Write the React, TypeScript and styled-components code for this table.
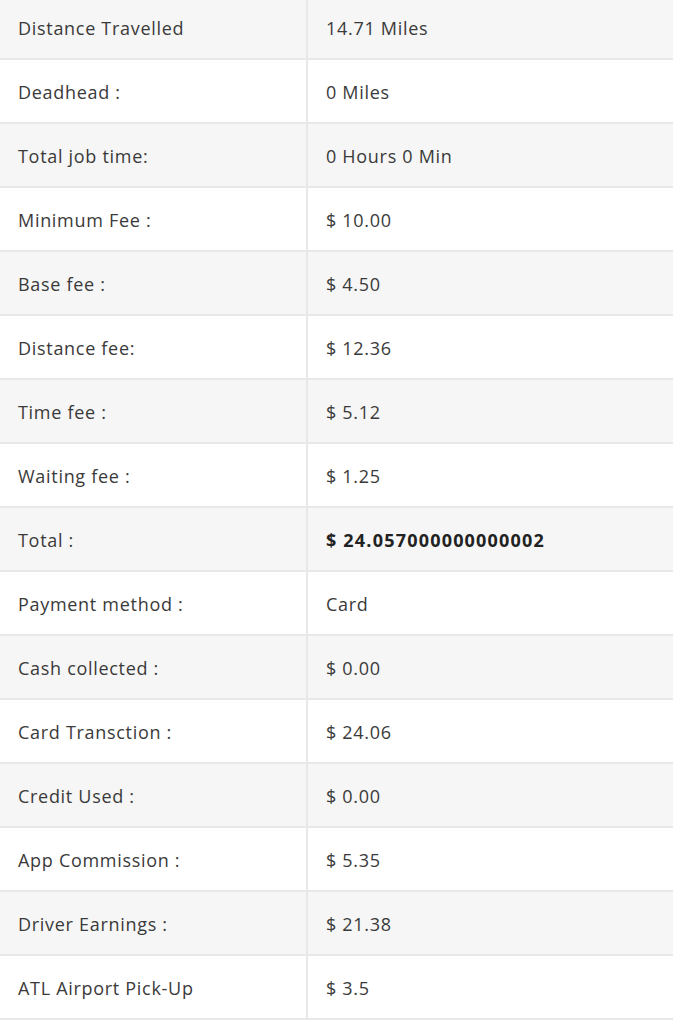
import React from "react";
import styled, { createGlobalStyle } from "styled-components";

const Global = createGlobalStyle`
  html, body { margin: 0; padding: 0; background: #ffffff; }
  body { font-family: "Open Sans", Lato, "Liberation Sans", sans-serif; overflow: hidden; }
`;

const Table = styled.div`
  display: flex;
  flex-direction: column;
  margin-top: -4px;
  width: 673px;
`;

const Row = styled.div<{ $shade: boolean }>`
  display: grid;
  grid-template-columns: 308px 1fr;
  height: 62px;
  background: ${(p) => (p.$shade ? "#f6f6f6" : "#ffffff")};
  border-bottom: 2px solid #e8e8e8;
`;

const Cell = styled.div<{ $bold?: boolean }>`
  display: flex;
  align-items: center;
  padding-top: 2px;
  padding-left: 18px;
  font-size: 18px;
  color: ${(p) => (p.$bold ? "#222222" : "#3a3a3a")};
  font-weight: ${(p) => (p.$bold ? 700 : 400)};
  letter-spacing: ${(p) => (p.$bold ? "1.2px" : "0.7px")};
`;

const LabelCell = styled(Cell)`
  border-right: 2px solid #e8e8e8;
`;

const ValueCell = styled(Cell)`
  padding-left: 18px;
`;

const rows: [string, string, boolean?][] = [
  ["Distance Travelled", "14.71 Miles"],
  ["Deadhead :", "0 Miles"],
  ["Total job time:", "0 Hours 0 Min"],
  ["Minimum Fee :", "$ 10.00"],
  ["Base fee :", "$ 4.50"],
  ["Distance fee:", "$ 12.36"],
  ["Time fee :", "$ 5.12"],
  ["Waiting fee :", "$ 1.25"],
  ["Total :", "$ 24.057000000000002", true],
  ["Payment method :", "Card"],
  ["Cash collected :", "$ 0.00"],
  ["Card Transction :", "$ 24.06"],
  ["Credit Used :", "$ 0.00"],
  ["App Commission :", "$ 5.35"],
  ["Driver Earnings :", "$ 21.38"],
  ["ATL Airport Pick-Up", "$ 3.5"],
];

export default function App() {
  return (
    <>
      <Global />
      <Table>
        {rows.map(([label, value, bold], i) => (
          <Row key={label} $shade={i % 2 === 0}>
            <LabelCell>{label}</LabelCell>
            <ValueCell $bold={bold}>{value}</ValueCell>
          </Row>
        ))}
      </Table>
    </>
  );
}
